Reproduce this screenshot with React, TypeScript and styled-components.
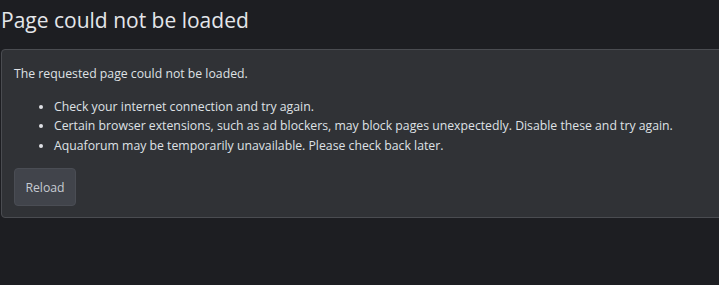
import React from "react";
import styled, { createGlobalStyle } from "styled-components";

const Global = createGlobalStyle`
  html, body { margin: 0; padding: 0; background: #1d1e22; overflow: hidden; }
  body { font-family: "Open Sans", "Noto Sans", sans-serif; color: #dfe1e5; }
`;

const Page = styled.div`
  display: flex;
  flex-direction: column;
  padding: 0 0 0 1px;
  width: 740px;
`;

const Title = styled.h1`
  margin: 6px 0 0 0;
  height: 43px;
  font-size: 21px;
  font-weight: 400;
  line-height: 28px;
  color: #e4e6ea;
`;

const Panel = styled.div`
  background: #303236;
  border: 1px solid #4a4c51;
  border-radius: 4px;
  padding: 14px 12px 11px 12px;
  display: flex;
  flex-direction: column;
  align-items: flex-start;
`;

const Text = styled.p`
  margin: 0;
  font-size: 12.25px;
  line-height: 19.5px;
`;

const List = styled.ul`
  margin: 13px 0 13px 0;
  padding-left: 40px;
  font-size: 12.25px;
  line-height: 19.5px;
`;

const Button = styled.button`
  font-family: inherit;
  font-size: 12.25px;
  color: #c6cbd2;
  background: #41444b;
  border: 1px solid #4a4d54;
  border-radius: 4px;
  width: 62px;
  height: 38px;
  padding: 0;
`;

export default function App() {
  return (
    <>
      <Global />
      <Page>
        <Title>Page could not be loaded</Title>
        <Panel>
          <Text>The requested page could not be loaded.</Text>
          <List>
            <li>Check your internet connection and try again.</li>
            <li>Certain browser extensions, such as ad blockers, may block pages unexpectedly. Disable these and try again.</li>
            <li>Aquaforum may be temporarily unavailable. Please check back later.</li>
          </List>
          <Button>Reload</Button>
        </Panel>
      </Page>
    </>
  );
}
